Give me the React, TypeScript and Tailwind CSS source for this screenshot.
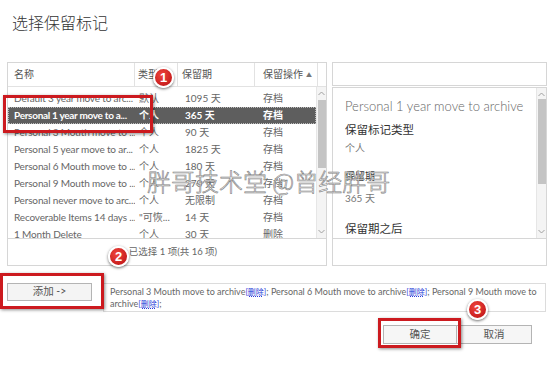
import React from 'react';

const rows = [
  { name: 'Default 3 year move to arc...', type: '默认', period: '1095 天', action: '存档' },
  { name: 'Personal 1 year move to a...', type: '个人', period: '365 天', action: '存档', selected: true },
  { name: 'Personal 3 Mouth move to ...', type: '个人', period: '90 天', action: '存档' },
  { name: 'Personal 5 year move to ar...', type: '个人', period: '1825 天', action: '存档' },
  { name: 'Personal 6 Mouth move to ...', type: '个人', period: '180 天', action: '存档' },
  { name: 'Personal 9 Mouth move to ...', type: '个人', period: '270 天', action: '存档' },
  { name: 'Personal never move to arc...', type: '个人', period: '无限制', action: '存档' },
  { name: 'Recoverable Items 14 days ...', type: '"可恢...', period: '14 天', action: '存档' },
  { name: '1 Month Delete', type: '个人', period: '30 天', action: '删除' },
];

const Chevron = ({ up }: { up?: boolean }) => (
  <svg width="7" height="5" viewBox="0 0 7 5" className="mx-auto">
    <path d={up ? 'M0.5 4 L3.5 1 L6.5 4' : 'M0.5 1 L3.5 4 L6.5 1'} fill="none" stroke="#a0a0a0" strokeWidth="1" />
  </svg>
);

const ScrollBar = ({ thumbTop, thumbHeight }: { thumbTop: number; thumbHeight: number }) => (
  <div className="relative w-[10px] h-full bg-[#f4f4f4] border-l border-[#e6e6e6] flex flex-col justify-between py-[4px]">
    <Chevron up />
    <div className="absolute left-[1px] right-0 bg-[#c4c4c4]" style={{ top: thumbTop, height: thumbHeight }} />
    <Chevron />
  </div>
);

const Badge = ({ n, className }: { n: number; className: string }) => (
  <div
    className={`absolute w-[21px] h-[21px] rounded-full border-[2px] border-white bg-[radial-gradient(circle_at_40%_35%,#f0443c,#b80f12)] shadow-[0_1px_3px_rgba(0,0,0,0.6)] flex items-center justify-center text-white text-[13px] font-bold leading-none font-['Liberation_Sans',sans-serif] ${className}`}
  >
    {n}
  </div>
);

const RedBox = ({ className }: { className: string }) => (
  <div className={`absolute border-[3px] border-[#cc1a1f] shadow-[1px_1px_3px_rgba(0,0,0,0.45)] ${className}`} />
);

const Del = () => <span className="text-[#2a3ad8] text-[8px] underline decoration-dotted">[删除]</span>;

export default function App() {
  return (
    <div className="relative w-[553px] h-[366px] overflow-hidden bg-white text-[#555] font-['Lato','Noto_Sans_CJK_SC',sans-serif]">
      <h1 className="pl-[12px] pt-[13px] text-[16px] leading-[20px] font-light text-[#333]">选择保留标记</h1>

      <div className="flex gap-[5px] pl-[7px] mt-[29px]">
        {/* list */}
        <div className="w-[320px] flex flex-col">
          <div className="border border-[#d6d6d6]">
            <div className="flex h-[24px] text-[10px] text-[#555] items-center border-b border-[#e2e2e2]">
              <div className="w-[127px] h-full flex items-center pl-[6px] border-r border-[#e2e2e2]">名称</div>
              <div className="w-[43px] h-full flex items-center pl-[3px] border-r border-[#e2e2e2]">类型</div>
              <div className="w-[77px] h-full flex items-center pl-[4px] border-r border-[#e2e2e2]">保留期</div>
              <div className="w-[63px] h-full flex items-center justify-between pl-[8px] pr-[5px] border-r border-[#e2e2e2]">
                保留操作<span className="text-[6px] text-[#777]">▲</span>
              </div>
              <div className="flex-1" />
            </div>
            <div className="flex h-[151px]">
              <div className="flex-1 overflow-hidden pt-[3px] text-[10px]">
                {rows.map((r) =>
                  <div
                    key={r.name}
                    className={`flex h-[17px] items-center whitespace-nowrap ${r.selected ? 'bg-[#5e5e5e] text-white font-bold outline-1 outline-dotted outline-[#bbb] -outline-offset-1' : 'text-[#666]'}`}
                  >
                    <div className={`w-[127px] pl-[6px] overflow-hidden ${r.selected ? 'tracking-[-0.3px]' : 'tracking-[-0.15px]'}`}>{r.name}</div>
                    <div className="w-[43px] pl-[4px] overflow-hidden">{r.type}</div>
                    <div className="w-[77px] pl-[7px]">{r.period}</div>
                    <div className="pl-[8px]">{r.action}</div>
                  </div>
                )}
              </div>
              <ScrollBar thumbTop={13} thumbHeight={68} />
            </div>
          </div>
          <div className="h-[27px] border border-t-0 border-[#d6d6d6] flex items-center justify-center pl-[12px] text-[9.5px] text-[#666]">
            已选择 1 项(共 16 项)
          </div>
        </div>

        {/* details */}
        <div className="w-[215px] flex flex-col">
          <div className="h-[24px] border border-[#d6d6d6]" />
          <div className="h-[152px] mt-[1px] border border-[#d6d6d6] flex">
            <div className="flex-1 overflow-hidden pl-[12px] pt-[8px]">
              <div className="text-[13px] font-light text-[#666] leading-[20px] whitespace-nowrap">Personal 1 year move to archive</div>
              <div className="mt-[6px] text-[11.5px] text-[#333] leading-[16px]">保留标记类型</div>
              <div className="mt-[3px] text-[10px] text-[#777] leading-[14px]">个人</div>
              <div className="mt-[14px] text-[10px] text-[#333] leading-[14px]">保留期</div>
              <div className="mt-[8px] text-[10px] text-[#777] leading-[14px]">365 天</div>
              <div className="mt-[16px] text-[11.5px] text-[#333] leading-[16px]">保留期之后</div>
            </div>
            <ScrollBar thumbTop={11} thumbHeight={85} />
          </div>
          <div className="h-[27px] border border-t-0 border-[#d6d6d6]" />
        </div>
      </div>

      <div className="flex pl-[7px] mt-[17px] gap-[11px]">
        <button className="w-[85px] h-[18px] border border-[#b4b4b4] bg-[#f4f4f4] text-[10.5px] text-[#555] flex items-center justify-center">
          添加 -&gt;
        </button>
        <div className="w-[443px] h-[29px] border border-[#dcdcdc] pl-[6px] pt-[2px] text-[9px] leading-[12px] text-[#666]">
          <div className="whitespace-nowrap">
            Personal 3 Mouth move to archive<Del />; Personal 6 Mouth move to archive<Del />; Personal 9 Mouth move to
          </div>
          <div>
            archive<Del />;
          </div>
        </div>
      </div>

      <div className="flex justify-end pr-[21px] mt-[13px]">
        <button className="w-[74px] h-[19px] border border-[#b4b4b4] bg-[#f6f6f6] text-[10.5px] text-[#555] flex items-center justify-center">确定</button>
        <button className="w-[75px] h-[19px] border border-l-0 border-[#b4b4b4] bg-[#f6f6f6] text-[10.5px] text-[#555] flex items-center justify-center">取消</button>
      </div>

      {/* annotations */}
      <RedBox className="left-[3px] top-[95px] w-[150px] h-[38px]" />
      <RedBox className="left-0 top-[273px] w-[104px] h-[36px]" />
      <RedBox className="left-[378px] top-[318px] w-[83px] h-[30px]" />
      <Badge n={1} className="left-[153px] top-[67px]" />
      <Badge n={2} className="left-[108px] top-[246px]" />
      <Badge n={3} className="left-[467px] top-[299px]" />

      <div className="absolute left-[147px] top-[166px] text-[24px] leading-[30px] whitespace-nowrap text-white font-['Noto_Sans_CJK_SC',sans-serif] font-light [-webkit-text-stroke:0.6px_#808080]">
        胖哥技术堂 @曾经胖哥
      </div>
    </div>
  );
}
